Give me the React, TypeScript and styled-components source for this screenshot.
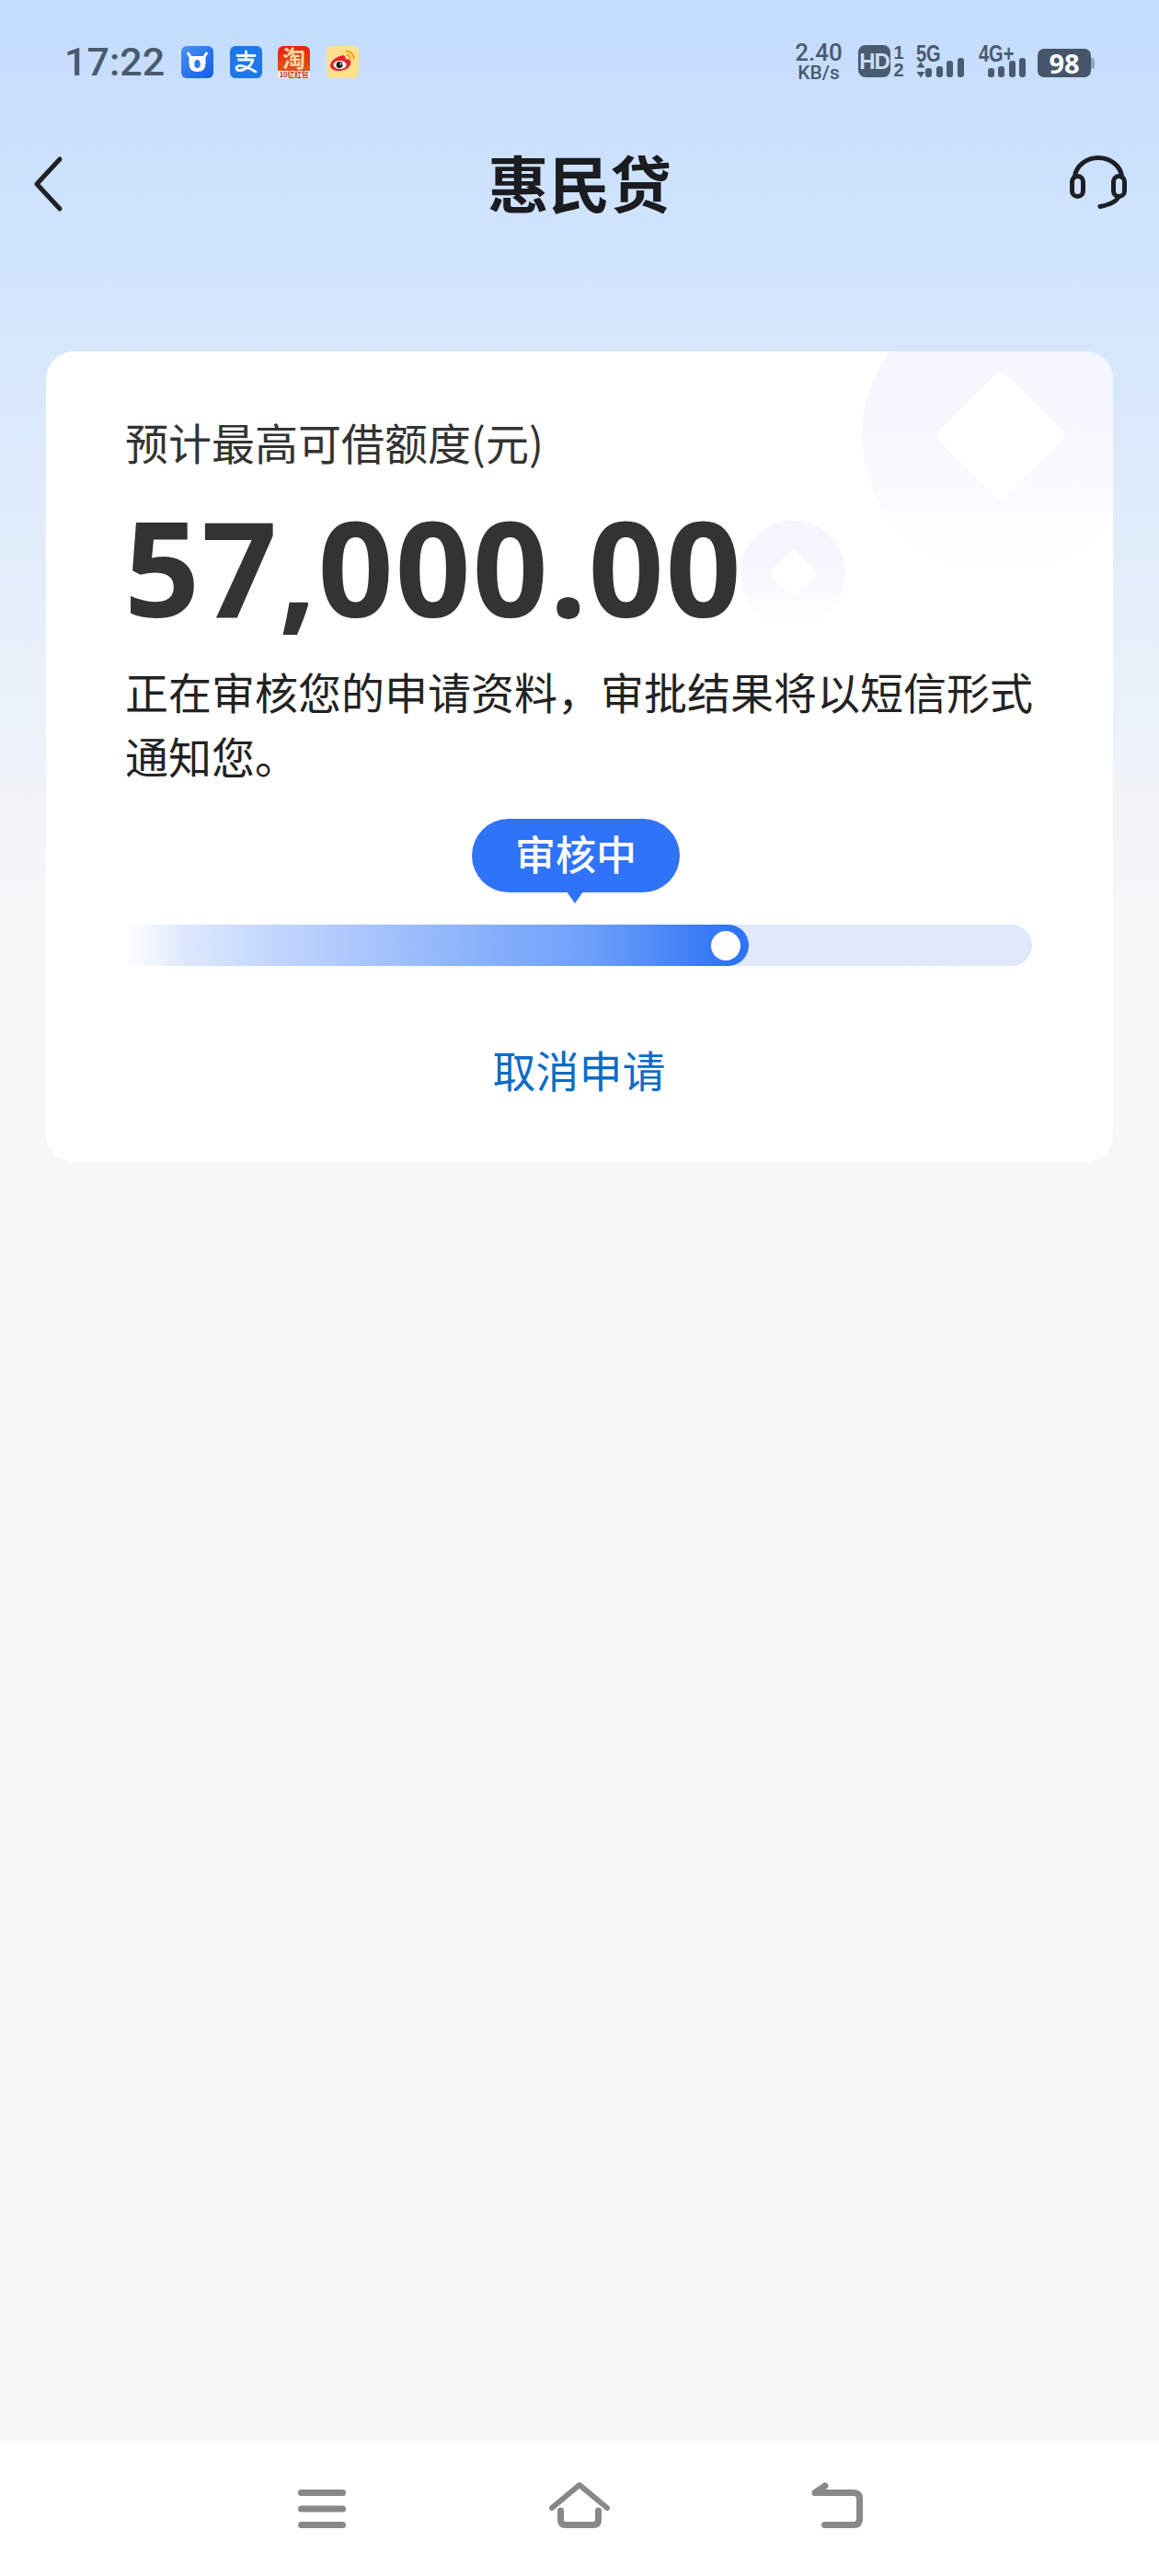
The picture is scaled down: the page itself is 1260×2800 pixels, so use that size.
import React from "react";
import styled, { createGlobalStyle } from "styled-components";

const cjk = `"Noto Sans CJK SC", "Noto Sans", sans-serif`;
const ink = "#4a5a6f";

const Global = createGlobalStyle`
  html, body { margin: 0; padding: 0; background: #f7f7f7; }
  #root { width: 1260px; }
`;

const Page = styled.div`
  width: 1260px;
  height: 2800px;
  display: flex;
  flex-direction: column;
  font-family: ${cjk};
  background: linear-gradient(180deg, #c3dcfc 0, #d2e5fd 300px, #e4eefb 640px, #f7f7f7 1000px);
`;

const StatusBar = styled.div`
  height: 130px;
  box-sizing: border-box;
  padding: 41px 74px 0 70px;
  display: flex;
  justify-content: space-between;
  align-items: flex-start;
`;
const StatusLeft = styled.div`
  display: flex;
  align-items: center;
  height: 52px;
`;
const Clock = styled.span`
  width: 127px;
  font: 500 43px/52px Roboto, sans-serif;
  color: ${ink};
`;
const AppIcons = styled.div`
  display: flex;
  gap: 17.5px;
`;
const StatusRight = styled.div`
  display: flex;
  align-items: flex-start;
  color: ${ink};
  padding-top: 8px;
`;
const Speed = styled.div`
  width: 54px;
  margin: -4px 16px 0 0;
  font-family: Roboto, sans-serif;
  font-weight: 500;
  text-align: center;
  span { display: block; }
`;
const SpeedValue = styled.span`
  font-size: 26px;
  line-height: 24px;
`;
const SpeedUnit = styled.span`
  font-size: 21px;
  line-height: 20px;
`;
const HdBadge = styled.div`
  width: 35px;
  height: 35px;
  border-radius: 8px;
  background: ${ink};
  color: #c8dffb;
  font: 700 24px/35px "Liberation Sans", sans-serif;
  text-align: center;
  letter-spacing: -1px;
  overflow: hidden;
`;
const SimDigits = styled.div`
  width: 14px;
  margin: -1px 12px 0 2px;
  font: 700 20px/19px "Liberation Sans", sans-serif;
  text-align: center;
`;
const Signal = styled.div`
  width: 52px;
  height: 35px;
  position: relative;
  & + & { margin-left: 16px; }
`;
const SignalLabel = styled.span`
  position: absolute;
  left: 0;
  top: -1px;
  font: 700 25px/20px "Liberation Sans", sans-serif;
  transform: scaleX(0.8);
  transform-origin: left center;
  white-space: nowrap;
`;
const Battery = styled.div`
  width: 58px;
  height: 31px;
  margin: 4px 0 0 12px;
  border-radius: 7px;
  background: #46566a;
  color: #fff;
  font: 700 29px/31px "Noto Sans", sans-serif;
  text-align: center;
  position: relative;
  &::after {
    content: "";
    position: absolute;
    right: -4px;
    top: 10px;
    width: 4px;
    height: 12px;
    border-radius: 0 3px 3px 0;
    background: #90a6c2;
  }
`;

const Header = styled.div`
  height: 140px;
  padding: 0 30px 0 34px;
  display: grid;
  grid-template-columns: 1fr auto 1fr;
  align-items: center;
`;
const HeaderTitle = styled.h1`
  margin: 0 4px 7px 0;
  font: 700 66.5px/80px ${cjk};
  color: #1b1c1f;
`;
const HeadsetSlot = styled.div`
  justify-self: end;
  display: flex;
`;

const Card = styled.section`
  margin: 112px 50px 0;
  height: 881px;
  box-sizing: border-box;
  padding: 63px 88px 0 87px;
  background: #fff;
  border-radius: 30px;
  position: relative;
  overflow: hidden;
`;
const Coin = styled.div<{ $size: number; $x: number; $y: number }>`
  position: absolute;
  left: ${(p) => p.$x}px;
  top: ${(p) => p.$y}px;
  width: ${(p) => p.$size}px;
  height: ${(p) => p.$size}px;
  border-radius: 50%;
  background: linear-gradient(180deg, #f3f6fe 0%, #f5f7fe 45%, #ffffff 100%);
  display: flex;
  align-items: center;
  justify-content: center;
`;
const CoinDiamond = styled.div<{ $size: number; $r: number }>`
  width: ${(p) => p.$size}px;
  height: ${(p) => p.$size}px;
  border-radius: ${(p) => p.$r}px;
  background: #fff;
  transform: rotate(45deg);
`;
const CardContent = styled.div`
  position: relative;
  z-index: 1;
`;
const AmountLabel = styled.div`
  font: 400 47px/70px ${cjk};
  color: #333;
  margin-left: -1px;
`;
const Amount = styled.div`
  font: 700 144px/144px "Noto Sans", sans-serif;
  color: #333;
  letter-spacing: 1.6px;
  margin: 28px 0 0 -2px;
`;
const Note = styled.p`
  margin: 29px -12px 0 -1px;
  font: 400 47px/70px ${cjk};
  color: #222;
`;
const Bubble = styled.div`
  width: 226px;
  height: 80px;
  margin: 34px 0 0 376px;
  border-radius: 40px;
  background: #2f73f8;
  color: #fff;
  font: 500 44px/75px ${cjk};
  text-align: center;
  position: relative;
  &::after {
    content: "";
    position: absolute;
    left: 103px;
    top: 79px;
    border-left: 9px solid transparent;
    border-right: 9px solid transparent;
    border-top: 13px solid #2f73f8;
  }
`;
const Track = styled.div`
  margin-top: 35px;
  height: 45px;
  border-radius: 23px;
  background: linear-gradient(90deg, #ffffff 0, #e0eafb 70px, #dfe9fb 100%);
  position: relative;
`;
const Fill = styled.div`
  height: 45px;
  border-radius: 0 23px 23px 0;
  background: linear-gradient(90deg, #ffffff 0, #dbe7fd 10%, #94b8fb 50%, #6d9ffa 75%, #2f73f8 97%);
  position: relative;
`;
const Knob = styled.div`
  position: absolute;
  right: 9px;
  top: 7px;
  width: 32px;
  height: 32px;
  border-radius: 50%;
  background: #fff;
`;
const CancelLink = styled.a`
  display: block;
  margin-top: 77px;
  text-align: center;
  font: 400 47px/70px ${cjk};
  color: #0a6cc6;
`;

const Spacer = styled.div`
  flex: 1;
`;
const NavBar = styled.nav`
  height: 147px;
  box-sizing: border-box;
  padding-top: 43px;
  background: #fff;
  display: flex;
  justify-content: center;
  gap: 200px;
`;
const BarsArt = styled.svg`
  position: absolute;
  left: 0;
  top: 0;
`;
const ArrowsArt = styled.svg`
  position: absolute;
  left: 0;
  top: 18px;
`;

const Bars = ({ x, tops }: { x: number[]; tops: number[] }) => (
  <BarsArt width="52" height="35" viewBox="0 0 52 35">
    {x.map((v, i) => (
      <rect key={v} x={v} y={tops[i]} width="7" height={35 - tops[i]} rx="3" fill={ink} />
    ))}
  </BarsArt>
);

const CowIcon = () => (
  <svg width="35" height="35" viewBox="0 0 35 35">
    <defs>
      <linearGradient id="cow" x1="0" y1="0" x2="1" y2="1">
        <stop offset="0" stopColor="#4a90f5" />
        <stop offset="1" stopColor="#0f5fe0" />
      </linearGradient>
    </defs>
    <rect width="35" height="35" rx="6" fill="url(#cow)" />
    <path d="M7.5 8 L10.5 12.5 H24.5 L27.5 8" fill="none" stroke="#fff" strokeWidth="3" strokeLinecap="round" strokeLinejoin="round" />
    <path d="M8.5 11 H26.5 V19 Q26.5 28 17.5 28 Q8.5 28 8.5 19 Z" fill="#fff" />
    <ellipse cx="17.5" cy="19.5" rx="3.2" ry="4.6" fill="#2f7bea" />
  </svg>
);

const AlipayIcon = () => (
  <svg width="35" height="35" viewBox="0 0 35 35">
    <rect width="35" height="35" rx="6" fill="#1f78ea" />
    <path d="M8 10.5 H27 M17.5 6 V14.5 M9.5 15 H25 C23.5 21.5 17 26.5 10 26.5 C6.5 26.5 6 22.5 9.5 21.5 C14.5 20.5 22 24.5 28 28" fill="none" stroke="#f2f8ff" strokeWidth="2.8" strokeLinecap="round" strokeLinejoin="round" />
  </svg>
);

const TaobaoIcon = () => (
  <svg width="35" height="35" viewBox="0 0 35 35">
    <defs>
      <linearGradient id="tb" x1="0" y1="0" x2="0" y2="1">
        <stop offset="0" stopColor="#e5200f" />
        <stop offset="0.75" stopColor="#e0521f" />
      </linearGradient>
    </defs>
    <rect width="35" height="35" rx="6" fill="url(#tb)" />
    <rect y="27" width="35" height="8" fill="#fbeee2" />
    <text x="17.5" y="23" textAnchor="middle" fontSize="25" fontWeight="700" fill="#ffd9a0" fontFamily={cjk}>淘</text>
    <text x="17.5" y="33.5" textAnchor="middle" fontSize="7.6" fontWeight="700" fill="#a8321c" fontFamily={cjk}>10亿红包</text>
  </svg>
);

const WeiboIcon = () => (
  <svg width="35" height="35" viewBox="0 0 35 35">
    <rect width="35" height="35" rx="6" fill="#fde08c" />
    <path d="M14.5 11 C20 8.5 21.5 12.5 20.5 14.5 C25 13.5 27.5 16.5 26 20 C24.5 24.5 18.5 27 13 27 C8 27 3.5 24.5 4 20.5 C4.5 17 9.5 12.5 14.5 11 Z" fill="#e2252d" />
    <ellipse cx="14.5" cy="20.5" rx="7" ry="4.5" fill="#fff" />
    <circle cx="14" cy="20.5" r="3.4" fill="#20140f" />
    <circle cx="15.2" cy="19.4" r="1" fill="#fff" />
    <path d="M21.5 6 C26.5 5.5 30 9.5 29.5 14 M22 10 C24.5 9.8 26 11.5 25.8 14" fill="none" stroke="#f0a41e" strokeWidth="2" strokeLinecap="round" />
  </svg>
);

const BackChevron = () => (
  <svg width="40" height="70" viewBox="0 0 40 70">
    <path d="M31 8 L6 35 L31 62" fill="none" stroke="#1f2226" strokeWidth="5" strokeLinecap="round" strokeLinejoin="round" />
  </svg>
);

const Headset = () => (
  <svg width="70" height="70" viewBox="0 -4 70 70">
    <g fill="none" stroke="#1c1f24" strokeWidth="5" strokeLinecap="round">
      <rect x="5.5" y="22.5" width="12" height="22" rx="6" />
      <rect x="50.5" y="22.5" width="12" height="22" rx="6" />
      <path d="M8 24 C10 10 22 2.5 34 2.5 C46 2.5 58 10 60 24" />
      <path d="M56 45 C53 51 44 54 36 55.5" />
    </g>
  </svg>
);

const MenuGlyph = () => (
  <svg width="80" height="60" viewBox="0 0 80 60">
    <path d="M17.5 13.5 H62.5 M17.5 31 H62.5 M17.5 48.5 H62.5" stroke="#888" strokeWidth="7" strokeLinecap="round" fill="none" />
  </svg>
);
const HomeGlyph = () => (
  <svg width="80" height="60" viewBox="0 0 80 60">
    <g fill="none" stroke="#888" strokeLinecap="round" strokeLinejoin="round">
      <path d="M10 30 L40 5 L70 30" strokeWidth="6" />
      <path d="M19.5 33 V43 Q19.5 48.5 25 48.5 H55 Q60.5 48.5 60.5 43 V33" strokeWidth="7" />
    </g>
  </svg>
);
const BackGlyph = () => (
  <svg width="80" height="60" viewBox="0 0 80 60">
    <g fill="none" stroke="#888" strokeLinecap="round" strokeLinejoin="round" strokeWidth="7">
      <path d="M26.5 48.5 H58 Q64.5 48.5 64.5 42 V20 Q64.5 13.5 58 13.5 H16 L27 6" />
    </g>
  </svg>
);

export default function App() {
  return (
    <Page>
      <Global />
      <StatusBar>
        <StatusLeft>
          <Clock>17:22</Clock>
          <AppIcons>
            <CowIcon />
            <AlipayIcon />
            <TaobaoIcon />
            <WeiboIcon />
          </AppIcons>
        </StatusLeft>
        <StatusRight>
          <Speed>
            <SpeedValue>2.40</SpeedValue>
            <SpeedUnit>KB/s</SpeedUnit>
          </Speed>
          <HdBadge>HD</HdBadge>
          <SimDigits>1<br />2</SimDigits>
          <Signal>
            <SignalLabel>5G</SignalLabel>
            <ArrowsArt width="10" height="18" viewBox="0 0 10 18">
              <path d="M5 0 L9.5 6.5 H0.5 Z M0.5 11 H9.5 L5 17.5 Z" fill={ink} />
            </ArrowsArt>
            <Bars x={[10, 22, 33, 45]} tops={[25, 23, 17, 14]} />
          </Signal>
          <Signal>
            <SignalLabel>4G+</SignalLabel>
            <Bars x={[10, 21, 33, 44]} tops={[25, 23, 17, 14]} />
          </Signal>
          <Battery>98</Battery>
        </StatusRight>
      </StatusBar>
      <Header>
        <BackChevron />
        <HeaderTitle>惠民贷</HeaderTitle>
        <HeadsetSlot>
          <Headset />
        </HeadsetSlot>
      </Header>
      <Card>
        <Coin $size={300} $x={887} $y={-59}>
          <CoinDiamond $size={103} $r={10} />
        </Coin>
        <Coin $size={114} $x={755} $y={184}>
          <CoinDiamond $size={39} $r={6} />
        </Coin>
        <CardContent>
          <AmountLabel>预计最高可借额度(元)</AmountLabel>
          <Amount>57,000.00</Amount>
          <Note>正在审核您的申请资料，审批结果将以短信形式通知您。</Note>
          <Bubble>审核中</Bubble>
          <Track>
            <Fill style={{ width: "68.7%" }}>
              <Knob />
            </Fill>
          </Track>
          <CancelLink>取消申请</CancelLink>
        </CardContent>
      </Card>
      <Spacer />
      <NavBar>
        <MenuGlyph />
        <HomeGlyph />
        <BackGlyph />
      </NavBar>
    </Page>
  );
}
